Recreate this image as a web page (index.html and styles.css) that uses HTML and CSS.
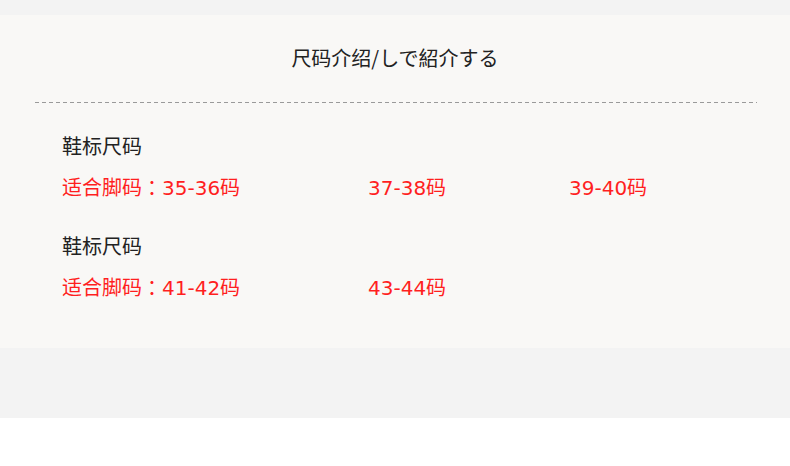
FILE: index.html
```html
<!DOCTYPE html>
<html lang="zh">
<head>
<meta charset="utf-8">
<link rel="stylesheet" href="styles.css">
</head>
<body>
<div class="page">
  <div class="top-band"></div>
  <section class="card">
    <h1 class="title">尺码介绍/しで紹介する</h1>
    <div class="divider"></div>
    <div class="block">
      <div class="label">鞋标尺码</div>
      <div class="sizes">
        <span class="size">适合脚码<span class="colon">：</span>35-36码</span>
        <span class="size">37-38码</span>
        <span class="size">39-40码</span>
      </div>
    </div>
    <div class="block">
      <div class="label">鞋标尺码</div>
      <div class="sizes">
        <span class="size">适合脚码<span class="colon">：</span>41-42码</span>
        <span class="size">43-44码</span>
        <span class="size"></span>
      </div>
    </div>
  </section>
  <div class="bottom-band"></div>
</div>
</body>
</html>
```
FILE: styles.css
```css
* { box-sizing: border-box; margin: 0; padding: 0; }
html, body { background: #ffffff; }
body {
  font-family: "Noto Sans CJK SC", "Noto Sans", sans-serif;
  width: 790px;
}
.page { display: flex; flex-direction: column; }
.top-band { height: 15px; background: #f3f3f3; }
.card {
  background: #f9f8f6;
  padding: 28px 0 45px;
  display: flex;
  flex-direction: column;
}
.title {
  font-weight: normal;
  font-size: 20px;
  line-height: 30px;
  color: #222;
  text-align: center;
}
.divider {
  margin: 29px 33px 0 35px;
  height: 1px;
  background-image: linear-gradient(to right, #9a9a9a 0 4px, transparent 4px 7px);
  background-size: 7px 1px;
  background-repeat: repeat-x;
}
.block {
  padding-left: 62px;
  display: flex;
  flex-direction: column;
  gap: 12px;
  margin-top: 28px;
}
.block:first-of-type { margin-top: 29px; }
.label {
  font-size: 20px;
  line-height: 30px;
  height: 30px;
  color: #222;
}
.sizes {
  display: grid;
  grid-template-columns: 306px 201px 1fr;
  grid-auto-rows: 30px;
  font-size: 20px;
  line-height: 30px;
  color: #ff1f1f;
}
.size {
  display: block;
  height: 30px;
  white-space: nowrap;
  font-family: "DejaVu Sans", "Noto Sans CJK SC", sans-serif;
}
.colon {
  display: inline-block;
  width: 20px;
  padding-right: 2px;
  text-align: center;
  font-family: "Noto Sans CJK TC", sans-serif;
  line-height: 30px;
  vertical-align: top;
}
.bottom-band { height: 70px; background: #f3f3f3; }
```
